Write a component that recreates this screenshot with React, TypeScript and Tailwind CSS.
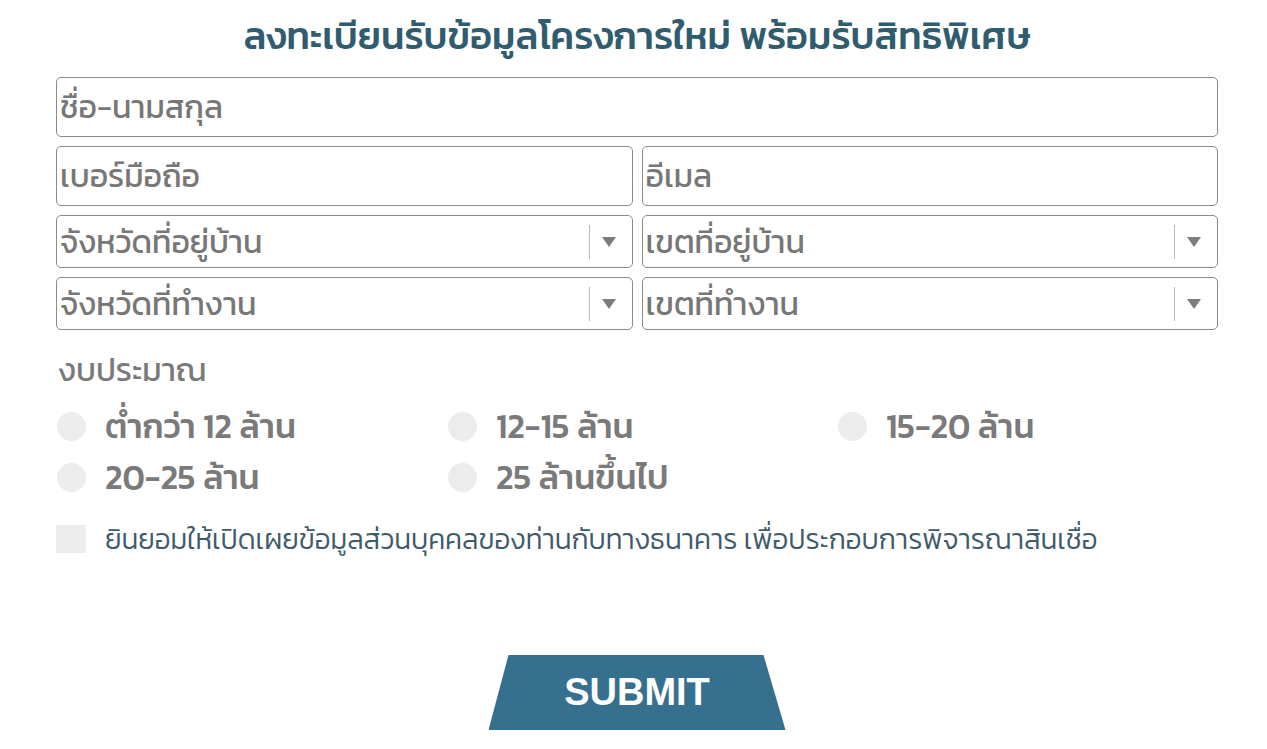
import React from 'react';

const thai = { fontFamily: 'Kanit, "Noto Sans Thai", sans-serif' };

function Field({ label, className = '' }: { label: string; className?: string }) {
  return (
    <div
      className={`flex h-[60px] items-center rounded-[5px] border border-[#8a8a8a] bg-white px-[3px] text-[32px] text-[#777] ${className}`}
    >
      {label}
    </div>
  );
}

function Select({ label }: { label: string }) {
  return (
    <div className="flex h-[53px] flex-1 items-center rounded-[5px] border border-[#8a8a8a] bg-white pl-[3px] text-[32px] text-[#777]">
      <span className="flex-1">{label}</span>
      <span className="h-[34px] w-px bg-[#bbb]" />
      <svg width="14" height="10" viewBox="0 0 14 10" className="ml-[12px] mr-[16px]">
        <path d="M0 0h14L7 10z" fill="#7d7d7d" />
      </svg>
    </div>
  );
}

function Radio({ label }: { label: string }) {
  return (
    <div className="flex h-[40px] items-center gap-[19px]">
      <span className="size-[29px] rounded-full bg-[#ececec]" />
      <span className="text-[34px] font-medium leading-[40px] text-[#7a7a7a]">{label}</span>
    </div>
  );
}

export default function App() {
  return (
    <div className="min-h-[749px] w-[1267px] bg-white" style={thai}>
      <div className="ml-[56px] flex w-[1162px] flex-col pt-[10px]">
        <h1 className="text-center text-[38px] font-medium leading-[52px] text-[#2f5c6f]">
          ลงทะเบียนรับข้อมูลโครงการใหม่ พร้อมรับสิทธิพิเศษ
        </h1>
        <div className="mt-[15px] flex flex-col gap-[9px]">
          <Field label="ชื่อ-นามสกุล" />
          <div className="flex gap-[9px]">
            <Field label="เบอร์มือถือ" className="flex-1" />
            <Field label="อีเมล" className="flex-1" />
          </div>
          <div className="flex gap-[9px]">
            <Select label="จังหวัดที่อยู่บ้าน" />
            <Select label="เขตที่อยู่บ้าน" />
          </div>
          <div className="flex gap-[9px]">
            <Select label="จังหวัดที่ทำงาน" />
            <Select label="เขตที่ทำงาน" />
          </div>
        </div>
        <div className="mt-[20px] h-[40px] pl-[2px] text-[32px] leading-[40px] text-[#7a7a7a]">งบประมาณ</div>
        <div className="mt-[16px] grid grid-cols-[391px_390px_1fr] gap-y-[11px] pl-[1px]">
          <Radio label="ต่ำกว่า 12 ล้าน" />
          <Radio label="12-15 ล้าน" />
          <Radio label="15-20 ล้าน" />
          <Radio label="20-25 ล้าน" />
          <Radio label="25 ล้านขึ้นไป" />
        </div>
        <div className="mt-[22px] flex h-[40px] items-center gap-[19px]">
          <span className="h-[28px] w-[30px] bg-[#ececec]" />
          <span className="text-[28px] font-light leading-[40px] text-[#3d5b6b]">
            ยินยอมให้เปิดเผยข้อมูลส่วนบุคคลของท่านกับทางธนาคาร เพื่อประกอบการพิจารณาสินเชื่อ
          </span>
        </div>
        <div className="mt-[96px] flex justify-center">
          <button className="h-[75px] w-[297px] bg-[#36708f] text-[38px] font-bold text-white [clip-path:polygon(20px_0,275px_0,100%_100%,0_100%)] [font-family:'Liberation_Sans',Arial,sans-serif]">
            SUBMIT
          </button>
        </div>
      </div>
    </div>
  );
}
